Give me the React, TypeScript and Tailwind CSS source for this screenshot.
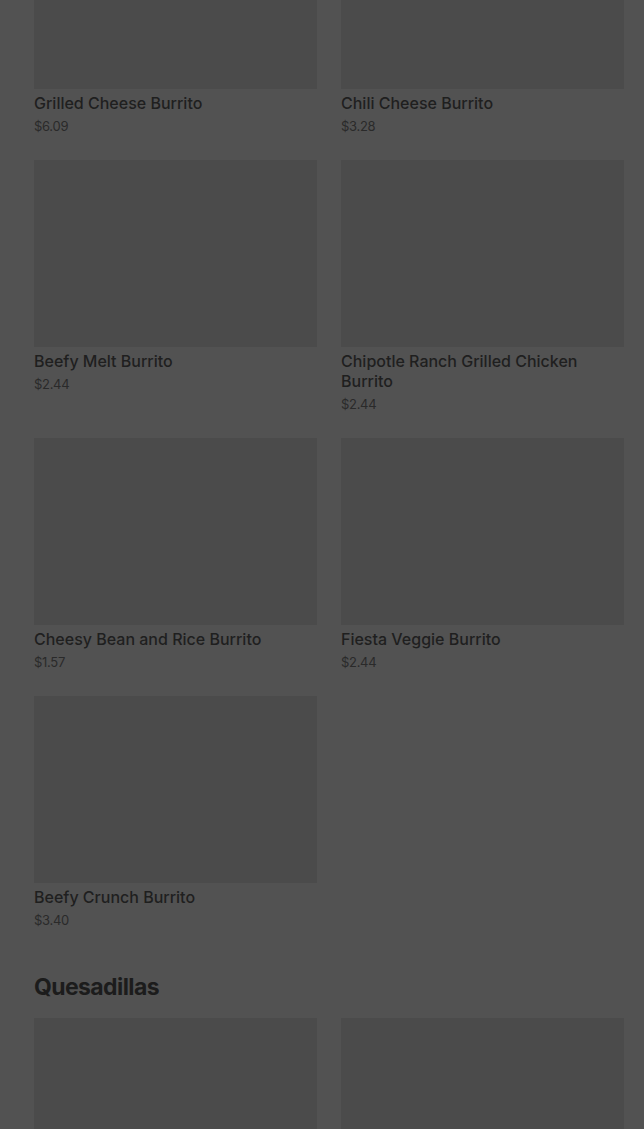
import React from "react";

type Item = { name: string; price: string };

const burritos: Item[] = [
  { name: "Grilled Cheese Burrito", price: "$6.09" },
  { name: "Chili Cheese Burrito", price: "$3.28" },
  { name: "Beefy Melt Burrito", price: "$2.44" },
  { name: "Chipotle Ranch Grilled Chicken Burrito", price: "$2.44" },
  { name: "Cheesy Bean and Rice Burrito", price: "$1.57" },
  { name: "Fiesta Veggie Burrito", price: "$2.44" },
  { name: "Beefy Crunch Burrito", price: "$3.40" },
];

function Card({ item }: { item: Item }) {
  return (
    <div className="flex flex-col">
      <div className="h-[187px] w-full bg-[#4b4b4b]" />
      <div className="mt-1 text-[16px] leading-[20px] font-medium text-[#1f1f1f] [font-family:Inter,'Liberation_Sans',sans-serif]">
        {item.name}
      </div>
      <div className="mt-1 text-[13px] leading-[18px] tracking-[-0.3px] text-[#2a2a2a] [font-family:Inter,'Liberation_Sans',sans-serif]">
        {item.price}
      </div>
    </div>
  );
}

export default function App() {
  return (
    <div className="h-[1129px] w-full bg-[#525252] overflow-hidden">
      <div className="-mt-[98px] pl-[34px] pr-[20px]">
        <div className="grid grid-cols-2 gap-x-6 gap-y-[25px]">
          {burritos.map((b) => (
            <Card key={b.name} item={b} />
          ))}
        </div>
        <h2 className="mt-[43px] text-[23px] leading-[30px] font-bold tracking-[-0.6px] text-[#1c1c1c] [font-family:Inter,'Liberation_Sans',sans-serif]">
          Quesadillas
        </h2>
        <div className="mt-[16px] grid grid-cols-2 gap-x-6">
          <div className="h-[187px] w-full bg-[#4b4b4b]" />
          <div className="h-[187px] w-full bg-[#4b4b4b]" />
        </div>
      </div>
    </div>
  );
}
